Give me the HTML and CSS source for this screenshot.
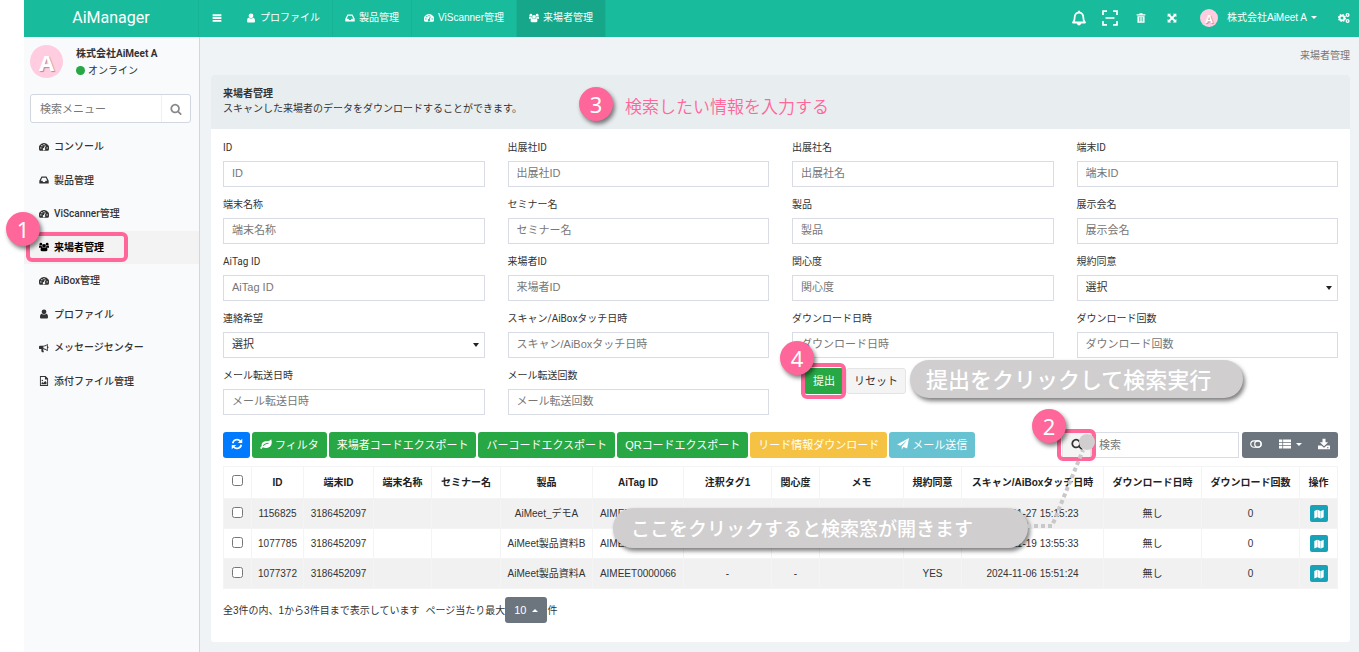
FILE: index.html
```html
<!DOCTYPE html>
<html lang="ja">
<head>
    <meta charset="UTF-8">
    <meta name="viewport" content="width=device-width, initial-scale=1.0">
    <title>AiManager</title>
    <link rel="stylesheet" href="styles.css">
</head>
<body>
    <!-- icon set -->
    <svg class="sprite" aria-hidden="true">
        <symbol id="i-bars" viewBox="0 0 16 16"><path d="M1 2h14v3H1zM1 6.500h14v3H1zM1 11h14v3H1z"/></symbol>
        <symbol id="i-user" viewBox="0 0 16 16"><circle cx="8" cy="4.500" r="3.800"/><path d="M4.500 7.500c2 1.800 5 1.800 7 0 2 0 2.900 2.500 2.900 5.200 0 1.600-.8 2.500-2.200 2.500H3.800c-1.400 0-2.200-.9-2.200-2.500 0-2.700.9-5.200 2.900-5.200z"/></symbol>
        <symbol id="i-inbox" viewBox="0 0 16 16"><path fill-rule="evenodd" d="M4 2.500h8L15.500 9v4.500h-15V9zM5 4.200L2.800 9H5.500l1 2h3l1-2h2.700L11 4.200z"/></symbol>
        <symbol id="i-dash" viewBox="0 0 16 16"><path fill-rule="evenodd" d="M8 1.500a8 8 0 0 1 6.800 12.500H1.200A8 8 0 0 1 8 1.500zM3 8.300a1.100 1.100 0 1 0 0 2.200 1.100 1.100 0 0 0 0-2.200zM4.600 4.700a1.100 1.100 0 1 0 0 2.200 1.100 1.100 0 0 0 0-2.200zM8 3.100a1.100 1.100 0 1 0 0 2.200 1.100 1.100 0 0 0 0-2.200zM13 8.300a1.100 1.100 0 1 0 0 2.200 1.100 1.100 0 0 0 0-2.200zM9.600 5.500L7.900 9.400a1.900 1.900 0 1 0 1.300.4l1.700-4z"/></symbol>
        <symbol id="i-group" viewBox="0 0 16 16"><circle cx="3" cy="3.500" r="2.200"/><circle cx="13" cy="3.500" r="2.200"/><circle cx="8" cy="6" r="3"/><path d="M0 9V7c0-1 .6-1.600 1.500-1.300 1 .5 1.900.5 2.800.2C4.200 7 4.600 8 5.300 9zM16 9V7c0-1-.6-1.600-1.500-1.300-1 .5-1.900.5-2.800.2.1 1.100-.3 2.100-1 3.100zM5 8.500c1.800 1.400 4.200 1.400 6 0 1.800 0 2.500 2 2.500 4 0 1.400-.8 2.300-2 2.300h-7c-1.200 0-2-.9-2-2.300 0-2 .7-4 2.500-4z"/></symbol>
        <symbol id="i-horn" viewBox="0 0 16 16"><path fill-rule="evenodd" d="M14 1v4.500c1.600.2 1.600 2.800 0 3V13c-2.200-1.800-4.500-2.900-7-3.200-.9.700-.3 1.500.3 2.200-.6.700-.1 1.400.9 2.200-.8 1-3 .9-3.800.1C3.800 12.700 3.300 11.400 4 9.700H1.500C.5 9.700 0 9 0 8.200V6c0-1 .6-1.600 1.500-1.600h4C8.500 4.400 11.300 3.200 14 1zM12.700 3.500C11 4.700 9.200 5.400 7 5.600v2.900c2.200.2 4 .9 5.700 2.100z"/></symbol>
        <symbol id="i-file" viewBox="0 0 16 16"><path fill-rule="evenodd" d="M1.500 0h9l4 4v12h-13zM3 1.500v13h10V5.500H9.500v-4zM4 13v-2l1.500-1.500L7 11l3-3 2 2v3z"/><circle cx="5.300" cy="7" r="1.200"/></symbol>
        <symbol id="i-search" viewBox="0 0 1792 1792"><path d="M1216 832q0-185-131.500-316.500t-316.500-131.500-316.500 131.500-131.500 316.500 131.500 316.500 316.500 131.500 316.500-131.500 131.500-316.500zm512 832q0 52-38 90t-90 38q-54 0-90-38l-343-342q-179 124-399 124-143 0-273.500-55.500t-225-150-150-225-55.500-273.500 55.500-273.500 150-225 225-150 273.500-55.500 273.500 55.500 225 150 150 225 55.500 273.500q0 220-124 399l343 343q37 37 37 90z"/></symbol>
        <symbol id="i-bell" viewBox="0 0 16 16"><path d="M2 12.500c1.400-1.200 1.700-2.800 1.700-5.300C3.700 4.300 5.500 2.500 8 2.500s4.300 1.800 4.300 4.700c0 2.500.3 4.100 1.700 5.300z" fill="none" stroke="currentColor" stroke-width="1.800" stroke-linejoin="round"/><path d="M7 .7h2v2H7zM5.800 13h4.400c-.2 1.500-1 2.400-2.200 2.400S6 14.500 5.800 13z"/></symbol>
        <symbol id="i-scan" viewBox="0 0 16 16"><path d="M1 5V1.200h4M11 1.200h4V5M15 11v3.800h-4M5 14.800H1V11M3.500 8h9" fill="none" stroke="currentColor" stroke-width="1.700"/></symbol>
        <symbol id="i-trash" viewBox="0 0 16 16"><path fill-rule="evenodd" d="M5.500 2V.5h5V2H15v2H1V2zM2.300 5h11.400v10.500H2.300zM5 6.500v7h1v-7zM7.500 6.500v7h1v-7zM10 6.500v7h1v-7z"/></symbol>
        <symbol id="i-expand" viewBox="0 0 16 16"><path d="M1 1h5.500L5 2.800l3 3 3-3L9.500 1H15v5.500L13.200 5l-3 3 3 3L15 9.500V15H9.500l1.500-1.800-3-3-3 3L6.500 15H1V9.500L2.800 11l3-3-3-3L1 6.500z"/></symbol>
        <symbol id="i-cogs" viewBox="0 0 16 16"><circle cx="5.300" cy="8" r="3.200" fill="none" stroke="currentColor" stroke-width="2.400"/><circle cx="5.300" cy="8" r="4.700" fill="none" stroke="currentColor" stroke-width="1.400" stroke-dasharray="2 1.700"/><circle cx="12.800" cy="4" r="1.800" fill="none" stroke="currentColor" stroke-width="1.800"/><circle cx="12.800" cy="12" r="1.800" fill="none" stroke="currentColor" stroke-width="1.800"/></symbol>
        <symbol id="i-refresh" viewBox="0 0 16 16"><path d="M2.300 7A5.800 5.800 0 0 1 12.500 4.300M13.700 9A5.800 5.800 0 0 1 3.500 11.700" fill="none" stroke="currentColor" stroke-width="2.200"/><path d="M15 1v5.800H9.200zM1 15V9.200h5.800z"/></symbol>
        <symbol id="i-leaf" viewBox="0 0 16 16"><path fill-rule="evenodd" d="M14.800 1.500c2 4.500.8 11-6 11.700-2 .2-3.800-.3-5-1-.8.800-1.200 2-2 2.300-1 .2-1.800-1-1.300-1.700.4-.9 1.400-1.500 1.800-2.200C1.500 6.700 3.800 4.700 7 4.200c2.800-.4 5.800.3 7.800-2.700zM11 6.300c-3 .2-5.300 1.300-7 3.400-.4.700.5 1.300 1 .7C6.700 8.600 8.500 7.600 11 7.500c.8-.1.800-1.200 0-1.200z"/></symbol>
        <symbol id="i-plane" viewBox="0 0 16 16"><path d="M16 0l-2.500 14-4.800-2L6.300 15.500V11.200L13.500 3 4.600 10.300 0 8.500z"/></symbol>
        <symbol id="i-toggle" viewBox="0 0 16 16"><path d="M5.300 3.700h5.400a4.300 4.300 0 0 1 0 8.600H5.300a4.300 4.300 0 0 1 0-8.600z" fill="none" stroke="currentColor" stroke-width="1.600"/><circle cx="10.500" cy="8" r="4.200" fill="none" stroke="currentColor" stroke-width="1.600"/></symbol>
        <symbol id="i-list" viewBox="0 0 16 16"><path d="M0 2h4.500v3.300H0zM5.500 2H16v3.300H5.500zM0 6.400h4.500v3.300H0zM5.500 6.400H16v3.300H5.500zM0 10.800h4.500V14H0zM5.500 10.800H16V14H5.500z"/></symbol>
        <symbol id="i-download" viewBox="0 0 16 16"><path fill-rule="evenodd" d="M6 1h4v4.500h3.500L8 11 2.500 5.500H6zM0 10h4.500L8 13l3.500-3H16v5H0zM12 12.300v1.200h2v-1.200z"/></symbol>
        <symbol id="i-map" viewBox="0 0 16 16"><path d="M.5 3l4.500-2v12L.5 15zM5.500 1l5 2v12l-5-2zM11 3l4.500-2v12L11 15z"/></symbol>
    </svg>

    <header class="navbar">
        <a href="#" class="brand">AiManager</a>
        <nav class="tabs">
            <button class="toggle" aria-label="メニュー"><svg class="icon"><use href="#i-bars"/></svg></button>
            <a href="#"><svg class="icon"><use href="#i-user"/></svg>プロファイル</a>
            <a href="#"><svg class="icon"><use href="#i-inbox"/></svg>製品管理</a>
            <a href="#"><svg class="icon"><use href="#i-dash"/></svg>ViScanner管理</a>
            <a href="#" class="active"><svg class="icon"><use href="#i-group"/></svg>来場者管理</a>
        </nav>
        <div class="tools">
            <button aria-label="通知"><svg class="icon icon-lg"><use href="#i-bell"/></svg></button>
            <button aria-label="スキャン"><svg class="icon icon-lg"><use href="#i-scan"/></svg></button>
            <button aria-label="削除"><svg class="icon"><use href="#i-trash"/></svg></button>
            <button aria-label="全画面"><svg class="icon"><use href="#i-expand"/></svg></button>
            <a href="#" class="account"><span class="avatar avatar-sm">A</span>株式会社AiMeet A<i class="caret"></i></a>
            <button class="cogs" aria-label="設定"><svg class="icon icon-md"><use href="#i-cogs"/></svg></button>
        </div>
    </header>

    <div class="wrapper">
        <aside class="sidebar">
            <div class="user-panel">
                <span class="avatar">A</span>
                <div>
                    <div class="user-name">株式会社AiMeet A</div>
                    <div class="status"><i class="dot"></i>オンライン</div>
                </div>
            </div>
            <form class="menu-search">
                <input type="text" placeholder="検索メニュー" aria-label="検索メニュー">
                <button type="button" aria-label="検索"><svg class="icon icon-md"><use href="#i-search"/></svg></button>
            </form>
            <ul class="menu">
                <li><a href="#"><svg class="icon"><use href="#i-dash"/></svg>コンソール</a></li>
                <li><a href="#"><svg class="icon"><use href="#i-inbox"/></svg>製品管理</a></li>
                <li><a href="#"><svg class="icon"><use href="#i-dash"/></svg>ViScanner管理</a></li>
                <li class="active">
                    <a href="#"><svg class="icon"><use href="#i-group"/></svg>来場者管理</a>
                    <span class="frame frame-menu"></span>
                    <span class="step step-menu">1</span>
                </li>
                <li><a href="#"><svg class="icon"><use href="#i-dash"/></svg>AiBox管理</a></li>
                <li><a href="#"><svg class="icon"><use href="#i-user"/></svg>プロファイル</a></li>
                <li><a href="#"><svg class="icon"><use href="#i-horn"/></svg>メッセージセンター</a></li>
                <li><a href="#"><svg class="icon"><use href="#i-file"/></svg>添付ファイル管理</a></li>
            </ul>
        </aside>

        <main class="content">
            <div class="breadcrumb">来場者管理</div>
            <section class="panel">
                <div class="panel-heading">
                    <strong>来場者管理</strong>
                    <div>スキャンした来場者のデータをダウンロードすることができます。</div>
                    <div class="hint"><span class="step">3</span><span class="hint-text">検索したい情報を入力する</span></div>
                </div>
                <div class="panel-body">
                    <form class="search-form">
                        <div class="field"><label for="f1">ID</label><input type="text" id="f1" placeholder="ID"></div>
                        <div class="field"><label for="f2">出展社ID</label><input type="text" id="f2" placeholder="出展社ID"></div>
                        <div class="field"><label for="f3">出展社名</label><input type="text" id="f3" placeholder="出展社名"></div>
                        <div class="field"><label for="f4">端末ID</label><input type="text" id="f4" placeholder="端末ID"></div>
                        <div class="field"><label for="f5">端末名称</label><input type="text" id="f5" placeholder="端末名称"></div>
                        <div class="field"><label for="f6">セミナー名</label><input type="text" id="f6" placeholder="セミナー名"></div>
                        <div class="field"><label for="f7">製品</label><input type="text" id="f7" placeholder="製品"></div>
                        <div class="field"><label for="f8">展示会名</label><input type="text" id="f8" placeholder="展示会名"></div>
                        <div class="field"><label for="f9">AiTag ID</label><input type="text" id="f9" placeholder="AiTag ID"></div>
                        <div class="field"><label for="f10">来場者ID</label><input type="text" id="f10" placeholder="来場者ID"></div>
                        <div class="field"><label for="f11">関心度</label><input type="text" id="f11" placeholder="関心度"></div>
                        <div class="field select"><label for="f12">規約同意</label><select id="f12"><option>選択</option></select></div>
                        <div class="field select"><label for="f13">連絡希望</label><select id="f13"><option>選択</option></select></div>
                        <div class="field"><label for="f14">スキャン/AiBoxタッチ日時</label><input type="text" id="f14" placeholder="スキャン/AiBoxタッチ日時"></div>
                        <div class="field"><label for="f15">ダウンロード日時</label><input type="text" id="f15" placeholder="ダウンロード日時"></div>
                        <div class="field"><label for="f16">ダウンロード回数</label><input type="text" id="f16" placeholder="ダウンロード回数"></div>
                        <div class="field"><label for="f17">メール転送日時</label><input type="text" id="f17" placeholder="メール転送日時"></div>
                        <div class="field"><label for="f18">メール転送回数</label><input type="text" id="f18" placeholder="メール転送回数"></div>
                        <div class="form-actions">
                            <button type="button" class="btn btn-success">提出</button>
                            <button type="reset" class="btn btn-default">リセット</button>
                            <span class="frame frame-submit"></span>
                            <span class="step step-submit">4</span>
                            <span class="callout callout-submit">提出をクリックして検索実行</span>
                        </div>
                    </form>

                    <div class="toolbar">
                        <button class="btn btn-primary" aria-label="更新"><svg class="icon"><use href="#i-refresh"/></svg></button>
                        <button class="btn btn-success"><svg class="icon"><use href="#i-leaf"/></svg>フィルタ</button>
                        <button class="btn btn-success">来場者コードエクスポート</button>
                        <button class="btn btn-success">バーコードエクスポート</button>
                        <button class="btn btn-success">QRコードエクスポート</button>
                        <button class="btn btn-warning">リード情報ダウンロード</button>
                        <button class="btn btn-info"><svg class="icon"><use href="#i-plane"/></svg>メール送信</button>
                        <div class="table-search">
                            <button class="btn btn-default" aria-label="検索"><svg class="icon"><use href="#i-search"/></svg></button>
                            <input type="text" placeholder="検索" aria-label="検索">
                            <span class="frame frame-search"></span>
                            <span class="step step-search">2</span>
                            <span class="callout callout-search">ここをクリックすると検索窓が開きます</span>
                            <svg class="leader" viewBox="0 0 70 100">
                                <path d="M0 94H25L56 18"/>
                                <circle cx="60" cy="10" r="8"/>
                            </svg>
                        </div>
                        <div class="btn-group">
                            <button aria-label="切替"><svg class="icon icon-md"><use href="#i-toggle"/></svg></button>
                            <button aria-label="列"><svg class="icon"><use href="#i-list"/></svg><i class="caret"></i></button>
                            <button aria-label="エクスポート"><svg class="icon"><use href="#i-download"/></svg></button>
                        </div>
                    </div>

                    <table class="data">
                        <colgroup>
                            <col class="w-check"><col class="w-id"><col class="w-device"><col class="w-name"><col class="w-seminar">
                            <col class="w-product"><col class="w-tag"><col class="w-note"><col class="w-interest"><col class="w-memo">
                            <col class="w-name"><col class="w-scan"><col class="w-dl"><col class="w-dl"><col class="w-op">
                        </colgroup>
                        <thead>
                            <tr>
                                <th><input type="checkbox" aria-label="すべて選択"></th>
                                <th>ID</th><th>端末ID</th><th>端末名称</th><th>セミナー名</th><th>製品</th><th>AiTag ID</th>
                                <th>注釈タグ1</th><th>関心度</th><th>メモ</th><th>規約同意</th><th>スキャン/AiBoxタッチ日時</th>
                                <th>ダウンロード日時</th><th>ダウンロード回数</th><th>操作</th>
                            </tr>
                        </thead>
                        <tbody>
                            <tr>
                                <td><input type="checkbox" aria-label="1156825"></td>
                                <td>1156825</td><td>3186452097</td><td></td><td></td><td>AiMeet_デモA</td><td>AIMEET0000066</td>
                                <td></td><td></td><td></td><td></td><td>2024-11-27 15:15:23</td><td>無し</td><td>0</td>
                                <td><button class="btn-map" aria-label="詳細"><svg class="icon"><use href="#i-map"/></svg></button></td>
                            </tr>
                            <tr>
                                <td><input type="checkbox" aria-label="1077785"></td>
                                <td>1077785</td><td>3186452097</td><td></td><td></td><td>AiMeet製品資料B</td><td>AIMEET0000066</td>
                                <td></td><td></td><td></td><td></td><td>2024-11-19 13:55:33</td><td>無し</td><td>0</td>
                                <td><button class="btn-map" aria-label="詳細"><svg class="icon"><use href="#i-map"/></svg></button></td>
                            </tr>
                            <tr>
                                <td><input type="checkbox" aria-label="1077372"></td>
                                <td>1077372</td><td>3186452097</td><td></td><td></td><td>AiMeet製品資料A</td><td>AIMEET0000066</td>
                                <td>-</td><td>-</td><td></td><td>YES</td><td>2024-11-06 15:51:24</td><td>無し</td><td>0</td>
                                <td><button class="btn-map" aria-label="詳細"><svg class="icon"><use href="#i-map"/></svg></button></td>
                            </tr>
                        </tbody>
                    </table>

                    <div class="pagination">
                        <span class="total">全3件の内、1から3件目まで表示しています</span>
                        <span>ページ当たり最大</span>
                        <button class="page-size">10<i class="caret caret-up"></i></button>
                        <span>件</span>
                    </div>
                </div>
            </section>
        </main>
    </div>
</body>
</html>
```
FILE: styles.css
```css
* {
    box-sizing: border-box;
}

body {
    margin: 0;
    padding-left: 24px;
    min-height: 100vh;
    display: flex;
    flex-direction: column;
    font-family: "Liberation Sans", "Noto Sans CJK JP", sans-serif;
    font-size: 10px;
    line-height: 15px;
    color: #333;
    background: #fff;
    overflow: hidden;
}

a {
    color: inherit;
    text-decoration: none;
}

button,
input,
select {
    font-family: inherit;
    font-size: 11px;
    color: inherit;
    margin: 0;
}

button {
    padding: 0;
    border: 0;
    background: none;
    cursor: pointer;
}

.sprite {
    display: none;
}

.icon {
    width: 10px;
    height: 10px;
    fill: currentColor;
    flex: none;
}

.icon-md {
    width: 12px;
    height: 12px;
}

.icon-lg {
    width: 16px;
    height: 16px;
}

.caret {
    display: inline-block;
    border: 3px solid transparent;
    border-top-color: currentColor;
    border-bottom: 0;
}

.caret-up {
    border-top: 0;
    border-bottom: 3px solid currentColor;
}

/* top bar */
.navbar {
    display: flex;
    height: 37px;
    background: #18bc9c;
    color: #fff;
}

.brand {
    width: 175px;
    line-height: 36px;
    font-family: Roboto, sans-serif;
    font-size: 16px;
    text-align: center;
    border-right: 1px solid #17b394;
}

.tabs,
.tools {
    display: flex;
    align-items: stretch;
}

.tabs a,
.account {
    display: flex;
    align-items: center;
    gap: 4px;
    padding: 0 12px 2px;
}

.tools {
    margin-left: auto;
}

.tabs a {
    border-right: 1px solid #17b394;
}

.tabs .active {
    background: #16a68a;
}

.toggle {
    width: 35px;
}

.tools button {
    width: 31px;
    display: flex;
    align-items: center;
    justify-content: center;
    padding-bottom: 2px;
}

.avatar {
    width: 33px;
    height: 33px;
    border-radius: 50%;
    background: #ffcce0;
    color: #fff;
    font: bold 22px/34px "Noto Sans", sans-serif;
    text-align: center;
    text-shadow: 1px 1px 1px #b08a98;
}

.avatar-sm {
    width: 18px;
    height: 18px;
    margin-right: 5px;
    font-size: 11px;
    line-height: 19px;
}

.tools .cogs {
    width: 30px;
}

/* sidebar */
.wrapper {
    display: flex;
    flex: 1;
}

.sidebar {
    flex: none;
    width: 176px;
    background: #f9fafc;
    border-right: 1px solid #d2d6de;
    font-family: Roboto, "Noto Sans CJK JP", sans-serif;
}

.user-panel {
    display: flex;
    gap: 13px;
    padding: 8px 6px 0;
}

.user-name {
    margin-top: 1px;
    font-weight: bold;
}

.status {
    display: flex;
    align-items: center;
    gap: 3px;
    margin-top: 2px;
}

.dot {
    width: 9px;
    height: 9px;
    border-radius: 50%;
    background: #28a745;
}

.menu-search {
    display: flex;
    height: 29px;
    margin: 16px 8px 7px 6px;
    border: 1px solid #d2d6de;
    border-radius: 3px;
    background: #fff;
}

.menu-search input {
    flex: 1;
    min-width: 0;
    border: 0;
    border-right: 1px solid #f0f0f0;
    padding: 1px 9px 0;
    background: none;
}

.menu-search button {
    display: flex;
    align-items: center;
    justify-content: center;
    width: 28px;
    color: #888;
}

.menu {
    display: grid;
    grid-auto-rows: 1fr;
    height: 268px;
    list-style: none;
    margin: 0;
    padding: 0;
    font-weight: 500;
}

.menu li {
    position: relative;
}

.menu a {
    display: flex;
    align-items: center;
    gap: 5px;
    height: 100%;
    padding-left: 15px;
}

.menu .active {
    background: #f3f3f3;
    color: #000;
    font-weight: bold;
}

/* content */
.content {
    flex: 1;
    min-width: 0;
    padding: 0 9px 11px 11px;
    background: #eff3f6;
}

.breadcrumb {
    padding: 11px 0 12px;
    text-align: right;
    color: #777;
}

.panel {
    background: #fff;
    border-radius: 3px;
}

.panel-heading {
    position: relative;
    height: 54px;
    padding: 11px 12px;
    border-radius: 3px 3px 0 0;
    background: #e8edf0;
}

.panel-body {
    padding: 11px 12px 19px;
}

.search-form {
    display: grid;
    grid-template-columns: repeat(4, 1fr);
    gap: 10px 23px;
}

.field {
    position: relative;
    display: flex;
    flex-direction: column;
    gap: 6px;
}

.field label {
    font-family: Roboto, "Noto Sans CJK JP", sans-serif;
}

.field input,
.field select,
.table-search input {
    width: 100%;
    height: 26px;
    padding: 0 8px 2px;
    border: 1px solid #d9dce4;
    border-radius: 0;
    background: #fff;
}

.table-search input {
    padding: 0 7px 1px;
}

.field select {
    appearance: none;
}

.select::after {
    content: "";
    position: absolute;
    right: 6px;
    bottom: 11px;
    border: 3px solid transparent;
    border-top: 4px solid #222;
    border-bottom: 0;
}

::placeholder {
    color: #777;
    opacity: 1;
}

.form-actions {
    position: relative;
    display: flex;
    align-items: flex-start;
    gap: 2px;
    padding-left: 12px;
}

.btn {
    height: 26px;
    padding: 0 7px 2px;
    border: 1px solid transparent;
    border-radius: 3px;
    color: #fff;
    white-space: nowrap;
    display: flex;
    align-items: center;
    justify-content: center;
    gap: 3px;
}

.btn .icon {
    width: 12px;
    height: 12px;
}

.btn-success {
    background: #28a745;
}

.btn-primary {
    width: 27px;
    background: #007bff;
}

.btn-warning {
    background: #f6c244;
}

.btn-info {
    background: #67c2d1;
}

.btn-default {
    background: #f4f4f4;
    border-color: #e4e4e4;
    color: #333;
}

.form-actions .btn-success {
    padding: 0 8px 2px;
}

.toolbar {
    display: flex;
    gap: 2px;
    margin-top: 17px;
}

.table-search {
    position: relative;
    display: flex;
    width: 177px;
    margin: 0 1px 0 auto;
}

.table-search .btn {
    width: 29px;
    flex: none;
    border-radius: 0;
}

.btn-group {
    display: flex;
    justify-content: space-between;
    width: 96px;
    height: 26px;
    border-radius: 3px;
    background: #6c757d;
    color: #fff;
}

.btn-group button {
    display: flex;
    align-items: center;
    gap: 5px;
    padding: 0 8px 2px;
}

.btn-group .icon {
    width: 12px;
    height: 12px;
}

/* list */
.data {
    width: 100%;
    margin-top: 8px;
    table-layout: fixed;
    border-collapse: collapse;
    text-align: center;
}

.data th,
.data td {
    height: 30px;
    padding: 0;
    border: 1px solid #f4f4f4;
    white-space: nowrap;
}

.data th {
    height: 32px;
    padding-bottom: 1px;
    color: #222;
}

.data tbody tr:nth-child(odd) {
    background: #f1f1f1;
}

.data input {
    display: block;
    width: 11px;
    height: 11px;
    margin: 0 auto 3px;
}

.w-check { width: 28px; }
.w-id { width: 52px; }
.w-device { width: 70px; }
.w-name { width: 58px; }
.w-seminar { width: 69px; }
.w-product { width: 92px; }
.w-tag { width: 91px; }
.w-note { width: 88px; }
.w-interest { width: 48px; }
.w-memo { width: 84px; }
.w-scan { width: 142px; }
.w-dl { width: 98px; }
.w-op { width: 38px; }

.btn-map {
    display: flex;
    align-items: center;
    justify-content: center;
    width: 18px;
    height: 17px;
    margin: 0 auto;
    border-radius: 2px;
    background: #17a2b8;
    color: #fff;
}

.pagination {
    display: flex;
    align-items: center;
    margin-top: 8px;
}

.total {
    margin-right: 6px;
}

.page-size {
    display: flex;
    align-items: center;
    gap: 6px;
    height: 26px;
    padding: 0 9px;
    border-radius: 3px;
    background: #6c757d;
    color: #fff;
}

/* guide marks lying over the screen */
.step {
    display: block;
    width: 34px;
    height: 34px;
    border-radius: 50%;
    background: #ff6699;
    color: #fff;
    font: 22px/34px "Noto Sans", sans-serif;
    text-align: center;
    box-shadow: 2px 3px 4px rgba(0, 0, 0, 0.5);
}

.frame {
    position: absolute;
    border: 4px solid #ff6699;
    border-radius: 6px;
}

.hint {
    position: absolute;
    top: 12px;
    left: 368px;
    display: flex;
    align-items: flex-start;
    gap: 12px;
    font-size: 17px;
    line-height: 34px;
    color: #ff6699;
    white-space: nowrap;
}

.hint-text {
    padding-top: 4px;
    font-weight: 350;
}

.callout {
    position: absolute;
    border-radius: 20px;
    background: #d0cece;
    color: #fff;
    font-weight: 500;
    white-space: nowrap;
    box-shadow: 2px 3px 4px rgba(0, 0, 0, 0.5);
}

.step-menu,
.step-submit,
.step-search {
    position: absolute;
    z-index: 2;
}

.frame-menu {
    top: 1px;
    left: 2px;
    width: 102px;
    height: 30px;
}

.step-menu {
    top: -19px;
    left: -18px;
}

.frame-submit {
    top: -5px;
    left: 9px;
    width: 45px;
    height: 36px;
}

.step-submit {
    top: -27px;
    left: -12px;
}

.callout-submit {
    top: -8px;
    left: 118px;
    width: 333px;
    height: 38px;
    padding-left: 16px;
    font-size: 22px;
    line-height: 41px;
}

.frame-search {
    top: -3px;
    left: -5px;
    width: 39px;
    height: 32px;
}

.step-search {
    top: -23px;
    left: -30px;
}

.callout-search {
    top: 76px;
    right: 211px;
    width: 415px;
    height: 40px;
    padding-left: 18px;
    font-size: 19px;
    line-height: 43px;
}

.leader {
    position: absolute;
    top: 0;
    left: -35px;
    width: 70px;
    height: 100px;
    fill: #d0cece;
    pointer-events: none;
}

.leader path {
    fill: none;
    stroke: #c8c8c8;
    stroke-width: 4px;
    stroke-dasharray: 4 3;
}
```
